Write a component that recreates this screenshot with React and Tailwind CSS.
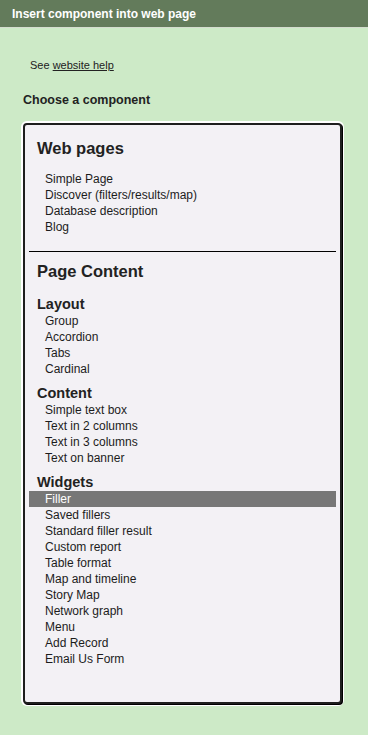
const webPages = [
  "Simple Page",
  "Discover (filters/results/map)",
  "Database description",
  "Blog",
];

const contentGroups = [
  { title: "Layout", items: ["Group", "Accordion", "Tabs", "Cardinal"] },
  {
    title: "Content",
    items: ["Simple text box", "Text in 2 columns", "Text in 3 columns", "Text on banner"],
  },
  {
    title: "Widgets",
    items: [
      "Filler",
      "Saved fillers",
      "Standard filler result",
      "Custom report",
      "Table format",
      "Map and timeline",
      "Story Map",
      "Network graph",
      "Menu",
      "Add Record",
      "Email Us Form",
    ],
  },
];

const SELECTED = "Filler";

const Item = ({ label }) => {
  const active = label === SELECTED;
  return (
    <div
      className={
        active
          ? "mx-[4px] bg-[#777777] pl-[16px] text-[12px] leading-[16px] text-white"
          : "pl-[20px] text-[12px] leading-[16px] text-[#1c1c1c]"
      }
    >
      {label}
    </div>
  );
};

export default function App() {
  return (
    <div className="flex h-[735px] w-[368px] flex-col bg-[#cdeac7] font-['Liberation_Sans',Arial,sans-serif]">
      <div className="flex h-[28px] items-center border-b border-[#d4dccf] bg-[#637b5b] px-[12px] text-[12px] font-bold text-white">
        Insert component into web page
      </div>

      <div className="pl-[23px] pr-[26px]">
        <p className="mt-[30px] pl-[7px] text-[11px] leading-[14px] text-[#222]">
          See <span className="underline">website help</span>
        </p>
        <h3 className="mt-[21px] text-[12.5px] font-bold leading-[14px] text-[#222]">
          Choose a component
        </h3>

        <div className="mt-[16px] h-[581px] rounded-[4px] border-2 border-[#1e1e1e] bg-[#f3f1f5] shadow-[1px_1px_0_#000,0_0_0_2px_#fff]">
          <h2 className="px-[12px] pt-[14px] text-[16.5px] font-bold leading-[19px] text-[#222]">
            Web pages
          </h2>
          <div className="mt-[13px]">
            {webPages.map((p) => (
              <Item key={p} label={p} />
            ))}
          </div>

          <div className="mx-[4px] mt-[16px] h-px bg-black" />

          <h2 className="px-[12px] pt-[10px] text-[16.5px] font-bold leading-[19px] text-[#222]">
            Page Content
          </h2>

          {contentGroups.map((g, i) => (
            <div key={g.title} className={i === 0 ? "mt-[15px]" : "mt-[8px]"}>
              <h4 className="px-[12px] text-[14.5px] font-bold leading-[17px] text-[#222]">
                {g.title}
              </h4>
              {g.items.map((it) => (
                <Item key={it} label={it} />
              ))}
            </div>
          ))}
        </div>
      </div>
    </div>
  );
}
